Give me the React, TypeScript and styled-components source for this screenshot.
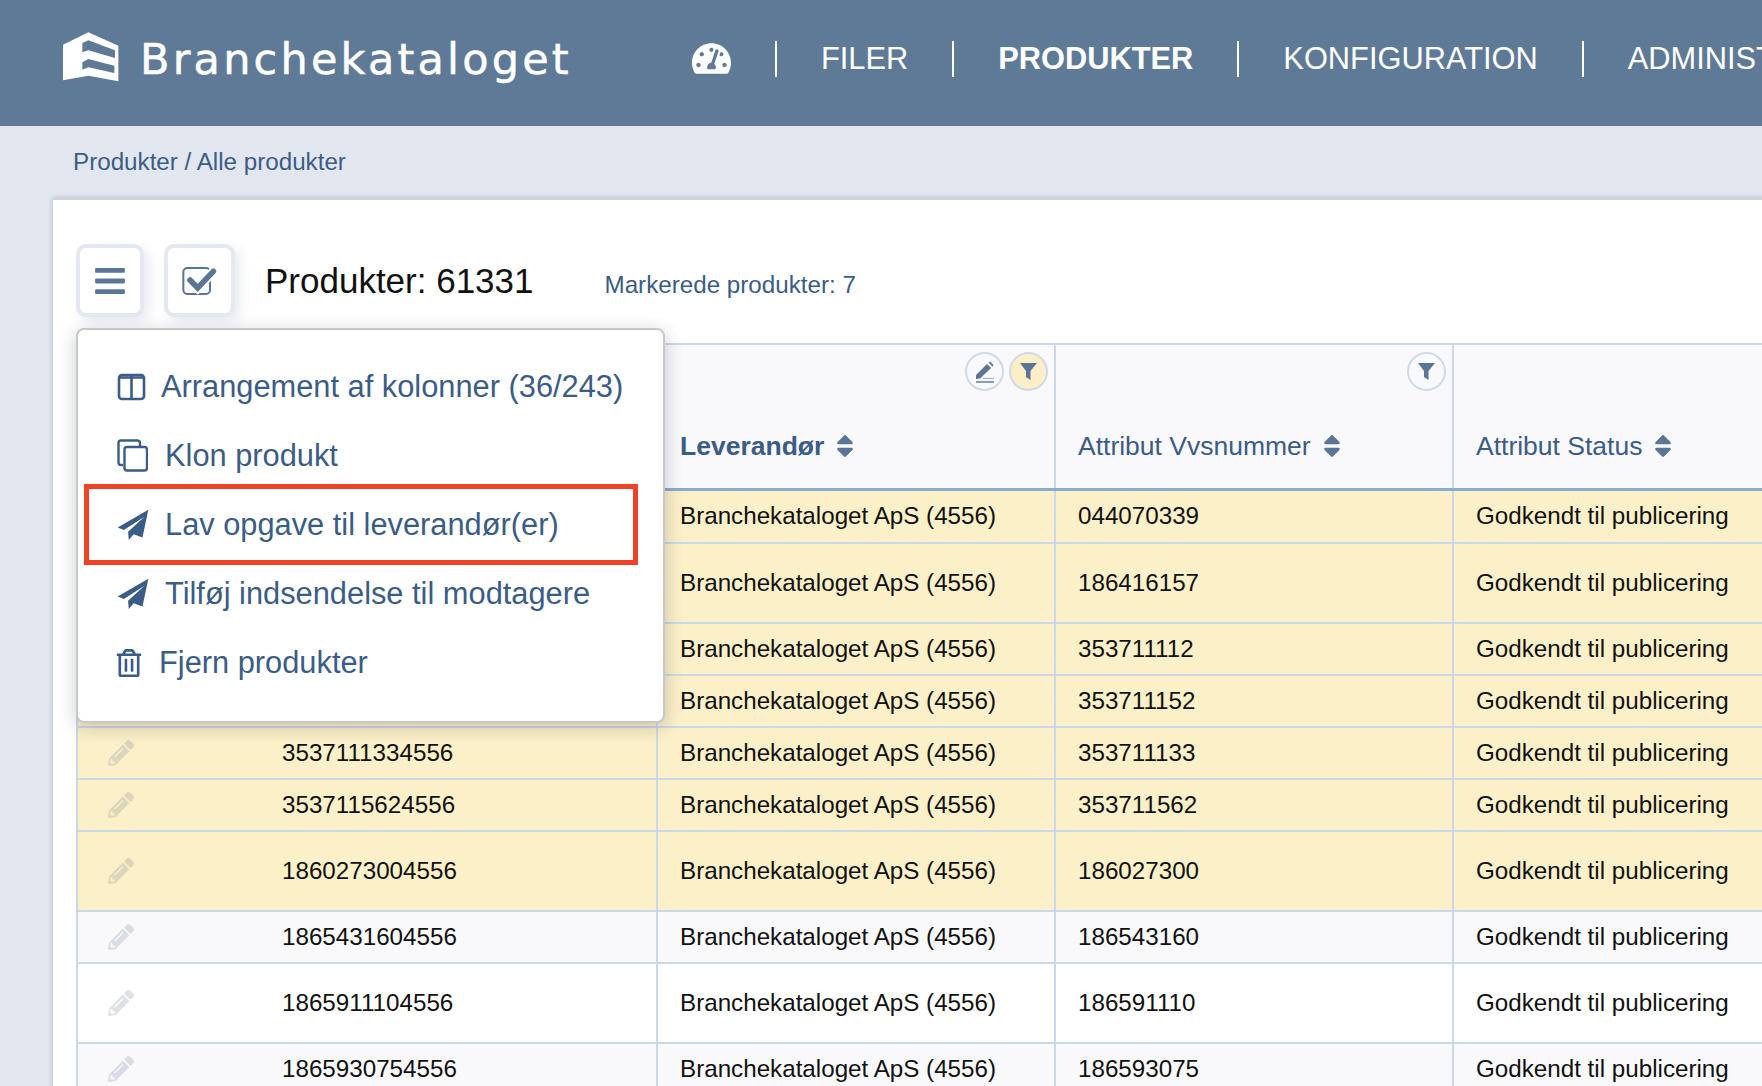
import React from "react";
import styled, { createGlobalStyle } from "styled-components";
import { FaTachometerAlt, FaPencilAlt, FaSort, FaRegTrashAlt, FaBars } from "react-icons/fa";

const Global = createGlobalStyle`
  html, body { margin: 0; padding: 0; height: 100%; overflow: hidden; background: #e2e6ee; }
  body { font-family: "Liberation Sans", Arial, sans-serif; }
  *, *::before, *::after { box-sizing: border-box; }
`;

const Page = styled.div`
  width: 1762px;
  height: 1086px;
  overflow: hidden;
  background: #e2e6ee;
  display: flex;
  flex-direction: column;
`;

const TopBar = styled.header`
  flex: none;
  height: 126px;
  background: #5f7a97;
  display: flex;
  align-items: center;
  padding-left: 55px;
  color: #fff;
  overflow: hidden;
  white-space: nowrap;
`;

const LogoMark = styled.svg`
  width: 80px;
  height: 70px;
  flex: none;
  margin-top: -11px;
`;

const Wordmark = styled.div`
  width: 552px;
  flex: none;
  margin-left: 5px;
  font-family: "DejaVu Sans", sans-serif;
  font-size: 43px;
  letter-spacing: 3.2px;
  -webkit-text-stroke: 0.5px #fff;
  margin-top: -9px;
`;

const Nav = styled.nav`
  display: flex;
  align-items: center;
  margin-top: -9px;
`;

const NavItem = styled.div<{ $active?: boolean; $first?: boolean }>`
  height: 36px;
  display: flex;
  align-items: center;
  padding: ${(p) => (p.$first ? "0 44px 0 0" : "0 44px 0 44px")};
  border-left: ${(p) => (p.$first ? "none" : "2px solid #fff")};
  font-size: 30.8px;
  font-weight: ${(p) => (p.$active ? 700 : 400)};
`;

const Breadcrumb = styled.div`
  flex: none;
  height: 72px;
  padding-left: 73px;
  display: flex;
  align-items: center;
  font-size: 24.2px;
  color: #3b5c87;
`;

const Card = styled.main`
  position: relative;
  flex: 1;
  margin-left: 53px;
  width: 1800px;
  background: #fff;
  border-top: 2px solid #cfd2d8;
  box-shadow: 0 0 5px rgba(40, 50, 70, 0.25);
  padding: 44px 0 0 23px;
`;

const Toolbar = styled.div`
  display: flex;
  align-items: center;
  height: 73px;
`;

const SquareButton = styled.button<{ $width: number; $gap: number }>`
  width: ${(p) => p.$width}px;
  height: 73px;
  margin-right: ${(p) => p.$gap}px;
  background: #fff;
  border: 4px solid #e4e9f0;
  border-radius: 10px;
  box-shadow: 5px 5px 12px rgba(120, 140, 170, 0.18);
  padding: 0;
  display: flex;
  align-items: center;
  justify-content: center;
  color: #5a7596;
`;

const Title = styled.h1`
  margin: 0 71px 0 0;
  font-size: 35px;
  font-weight: 400;
  color: #111;
`;

const Marked = styled.div`
  font-size: 24.2px;
  color: #3b5c87;
  margin-top: 8px;
`;

const Menu = styled.div`
  position: absolute;
  z-index: 5;
  left: 23px;
  top: 128px;
  width: 589px;
  height: 395px;
  background: #fff;
  border: 2px solid #c6c8cb;
  border-radius: 8px;
  box-shadow: 0 4px 18px rgba(30, 40, 60, 0.24);
  padding: 22px 0 0 39px;
`;

const MenuItem = styled.div<{ $highlight?: boolean }>`
  position: relative;
  height: 69px;
  display: flex;
  align-items: center;
  font-size: 30.8px;
  color: #3b5c87;
  white-space: nowrap;
  &::after {
    content: "";
    display: ${(p) => (p.$highlight ? "block" : "none")};
    position: absolute;
    left: -33px;
    top: -6px;
    width: 554px;
    height: 81px;
    border: 5px solid #ee4226;
  }
`;

const MenuIcon = styled.span<{ $width: number }>`
  width: ${(p) => p.$width}px;
  flex: none;
  display: flex;
  align-items: center;
  & > svg.trash { margin-left: -2px; }
`;

const Grid = styled.table`
  margin-top: 26px;
  table-layout: fixed;
  border-collapse: collapse;
  width: 1689px;
  border-top: 2px solid #ccd8e8;
`;

const HeadCell = styled.th<{ $width: number }>`
  width: ${(p) => p.$width}px;
  height: 145px;
  background: #f9f9fb;
  border-left: 2px solid #ccd8e8;
  border-right: 2px solid #ccd8e8;
  border-bottom: 3px solid #8eabcd;
  padding: 7px 6px 0 22px;
  vertical-align: top;
  text-align: left;
`;

const HeadActions = styled.div`
  height: 39px;
  display: flex;
  justify-content: flex-end;
  gap: 5px;
`;

const RoundAction = styled.span<{ $on?: boolean }>`
  width: 39px;
  height: 39px;
  border-radius: 50%;
  border: 2px solid #cfdae8;
  background: ${(p) => (p.$on ? "#fcefc8" : "#f9f9fb")};
  display: flex;
  align-items: center;
  justify-content: center;
`;

const HeadLabel = styled.div<{ $bold?: boolean }>`
  margin-top: 40px;
  height: 30px;
  display: flex;
  align-items: center;
  gap: 7px;
  font-size: 26.5px;
  font-weight: ${(p) => (p.$bold ? 700 : 400)};
  color: #3b5c87;
  svg { color: #5a7596; }
`;

const Row = styled.tr<{ $height: number; $bg: string }>`
  height: ${(p) => p.$height}px;
  background: ${(p) => p.$bg};
`;

const Cell = styled.td`
  border: 2px solid #ccd8e8;
  padding: 0 0 0 22px;
  font-size: 24.2px;
  color: #111;
  white-space: nowrap;
  vertical-align: middle;
`;

const IdCell = styled.div`
  display: flex;
  align-items: center;
  margin-left: 8px;
  svg { color: rgba(110, 125, 150, 0.23); flex: none; margin-right: 148px; }
`;

const colStyle = { stroke: "#3b5c87", fill: "none" };

const Logo = () => (
  <LogoMark viewBox="0 0 240 210">
    <path fill="#fff" d="M24 65 L100 28 L190 68 L190 175 L100 158 L24 172 Z" />
    <path fill="#5f7a97" d="M82 60 L100 52 L180 82 L180 105 L100 82 L82 88 Z M82 118 L100 108 L178 128 L178 150 L100 133 L82 140 Z" />
  </LogoMark>
);

const CheckIcon = () => (
  <svg width="36" height="30" viewBox="0 0 108 90">
    <rect x="4" y="6" width="80" height="78" rx="12" fill="none" stroke="#5a7596" strokeWidth="6" />
    <path d="M24 42 L47 66 L94 16" fill="none" stroke="#fff" strokeWidth="28" />
    <path d="M24 42 L47 66 L94 16" fill="none" stroke="#5a7596" strokeWidth="17" strokeLinecap="round" />
  </svg>
);

const ColumnsIcon = () => (
  <svg width="29" height="28" viewBox="0 0 29 28">
    <rect x="2" y="2" width="25" height="24" rx="3" {...colStyle} strokeWidth="2.6" />
    <path d="M14.5 2 V26 M2 4.5 H27" {...colStyle} strokeWidth="2.6" />
  </svg>
);

const CopyIcon = () => (
  <svg width="31" height="33" viewBox="0 0 31 33">
    <path d="M6 26 H4 Q1.5 26 1.5 23.5 V4 Q1.5 1.5 4 1.5 H20 Q23 1.5 23 4 V7" {...colStyle} strokeWidth="2.4" />
    <rect x="7.5" y="8" width="22.5" height="23.5" rx="2.5" {...colStyle} strokeWidth="2.4" />
  </svg>
);

const PlaneIcon = () => (
  <svg width="32" height="32" viewBox="34 8 98 98">
    <path fill="#3b5c87" d="M36 65 L130 10 L112 95 L85 85 L70 103 L68 78 L118 32 L55 72 Z" />
  </svg>
);

const EditIcon = () => (
  <svg width="20" height="22" viewBox="0 0 20 22">
    <path fill="#5a7596" d="M1 14 L12 3 L16 7 L5 17.5 L1 18 Z M13.5 1.5 L15 0.5 L18.5 4 L17.5 5.7 Z" />
    <path d="M1 21 H19" stroke="#5a7596" strokeWidth="1.4" />
    <path d="M8 17.5 H19" stroke="#a9b9cd" strokeWidth="1.2" />
  </svg>
);

const FilterIcon = () => (
  <svg width="17" height="17" viewBox="0 0 17 17">
    <path fill="#5a7596" d="M0 0 H17 L10.5 8 V17 L6 14 V8 Z" />
  </svg>
);

const SUPPLIER = "Branchekataloget ApS (4556)";
const STATUS = "Godkendt til publicering";
const YELLOW = "#fcf0c8";

const rows = [
  { id: "0440703394556", vvs: "044070339", h: 54, bg: YELLOW },
  { id: "1864161574556", vvs: "186416157", h: 80, bg: YELLOW },
  { id: "3537111124556", vvs: "353711112", h: 52, bg: YELLOW },
  { id: "3537111524556", vvs: "353711152", h: 52, bg: YELLOW },
  { id: "3537111334556", vvs: "353711133", h: 52, bg: YELLOW },
  { id: "3537115624556", vvs: "353711562", h: 52, bg: YELLOW },
  { id: "1860273004556", vvs: "186027300", h: 80, bg: YELLOW },
  { id: "1865431604556", vvs: "186543160", h: 52, bg: "#f9f9fb" },
  { id: "1865911104556", vvs: "186591110", h: 80, bg: "#fff" },
  { id: "1865930754556", vvs: "186593075", h: 52, bg: "#f9f9fb" },
];

export default function App() {
  return (
    <Page>
      <Global />
      <TopBar>
        <Logo />
        <Wordmark>Branchekataloget</Wordmark>
        <Nav>
          <NavItem $first>
            <FaTachometerAlt size={39} />
          </NavItem>
          <NavItem>FILER</NavItem>
          <NavItem $active>PRODUKTER</NavItem>
          <NavItem>KONFIGURATION</NavItem>
          <NavItem>ADMINISTRATION</NavItem>
        </Nav>
      </TopBar>
      <Breadcrumb>Produkter / Alle produkter</Breadcrumb>
      <Card>
        <Toolbar>
          <SquareButton $width={68} $gap={20}>
            <FaBars size={34} />
          </SquareButton>
          <SquareButton $width={71} $gap={30}>
            <CheckIcon />
          </SquareButton>
          <Title>Produkter: 61331</Title>
          <Marked>Markerede produkter: 7</Marked>
        </Toolbar>
        <Menu>
          <MenuItem>
            <MenuIcon $width={44}><ColumnsIcon /></MenuIcon>
            Arrangement af kolonner (36/243)
          </MenuItem>
          <MenuItem>
            <MenuIcon $width={48}><CopyIcon /></MenuIcon>
            Klon produkt
          </MenuItem>
          <MenuItem $highlight>
            <MenuIcon $width={48}><PlaneIcon /></MenuIcon>
            Lav opgave til leverandør(er)
          </MenuItem>
          <MenuItem>
            <MenuIcon $width={48}><PlaneIcon /></MenuIcon>
            Tilføj indsendelse til modtagere
          </MenuItem>
          <MenuItem>
            <MenuIcon $width={42}><FaRegTrashAlt className="trash" size={28} color="#3b5c87" /></MenuIcon>
            Fjern produkter
          </MenuItem>
        </Menu>
        <Grid>
          <thead>
            <tr>
              <HeadCell $width={580} />
              <HeadCell $width={398}>
                <HeadActions>
                  <RoundAction><EditIcon /></RoundAction>
                  <RoundAction $on><FilterIcon /></RoundAction>
                </HeadActions>
                <HeadLabel $bold>Leverandør <FaSort size={28} /></HeadLabel>
              </HeadCell>
              <HeadCell $width={398}>
                <HeadActions>
                  <RoundAction><FilterIcon /></RoundAction>
                </HeadActions>
                <HeadLabel>Attribut Vvsnummer <FaSort size={28} /></HeadLabel>
              </HeadCell>
              <HeadCell $width={313}>
                <HeadActions />
                <HeadLabel>Attribut Status <FaSort size={28} /></HeadLabel>
              </HeadCell>
            </tr>
          </thead>
          <tbody>
            {rows.map((r) => (
              <Row key={r.id} $height={r.h} $bg={r.bg}>
                <Cell>
                  <IdCell>
                    <FaPencilAlt size={26} />
                    {r.id}
                  </IdCell>
                </Cell>
                <Cell>{SUPPLIER}</Cell>
                <Cell>{r.vvs}</Cell>
                <Cell>{STATUS}</Cell>
              </Row>
            ))}
          </tbody>
        </Grid>
      </Card>
    </Page>
  );
}
